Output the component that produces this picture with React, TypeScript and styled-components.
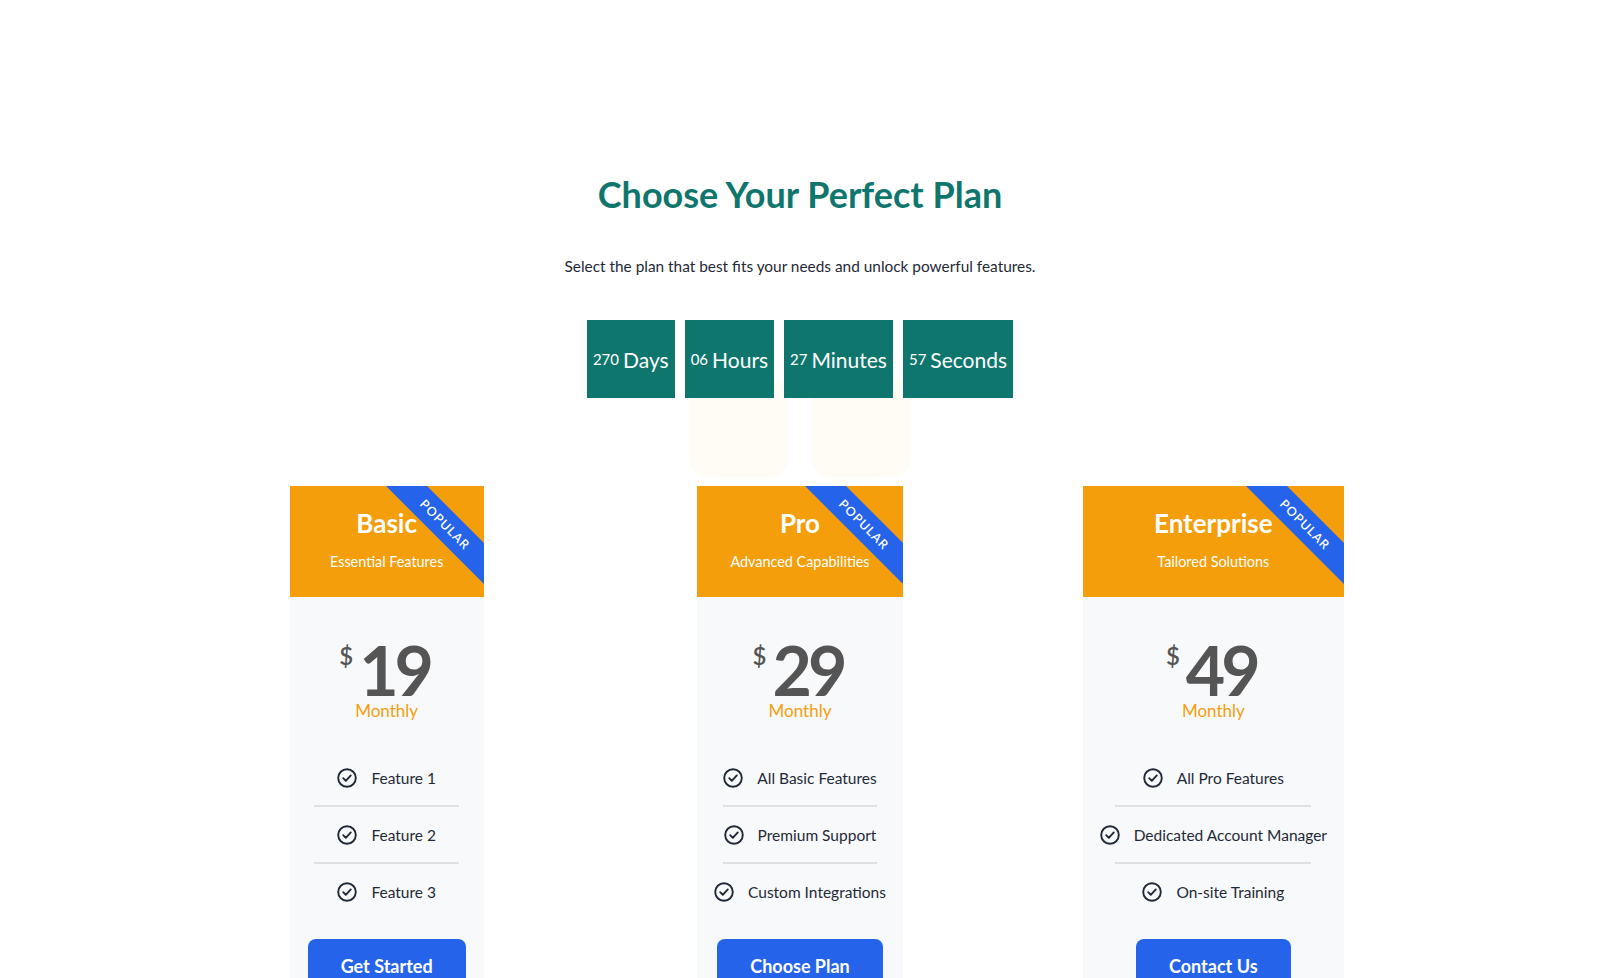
import React from "react";
import styled, { createGlobalStyle } from "styled-components";

const GlobalStyle = createGlobalStyle`
  html, body { margin: 0; padding: 0; background: #ffffff; }
  body { font-family: "Lato", "Noto Sans", sans-serif; color: #1f2937; }
  * { box-sizing: border-box; }
`;

const Page = styled.main`
  padding-top: 173px;
  text-align: center;
`;

const Title = styled.h1`
  margin: 0;
  font-size: 36px;
  line-height: 42px;
  font-weight: 700;
  color: #0f766e;
`;

const Subtitle = styled.p`
  margin: 42px 0 0;
  font-size: 15.4px;
  line-height: 18px;
  color: #1f2937;
`;

const TimerArea = styled.div`
  position: relative;
  margin-top: 45px;
`;

const Blob = styled.div<{ $offset: number }>`
  position: absolute;
  top: 57px;
  left: calc(50% + ${(p) => p.$offset}px);
  width: 100px;
  height: 100px;
  border-radius: 20px;
  background: #fefcf4;
  z-index: 0;
`;

const TimerRow = styled.div`
  position: relative;
  z-index: 1;
  display: flex;
  justify-content: center;
  gap: 10px;
`;

const TimerBox = styled.div`
  height: 78px;
  padding: 0 6px;
  background: #0f766e;
  color: #ffffff;
  display: flex;
  align-items: center;
  justify-content: center;
  white-space: nowrap;
`;

const TimerValue = styled.span`
  font-size: 15px;
  margin-right: 4px;
`;

const TimerLabel = styled.span`
  font-size: 21px;
`;

const Grid = styled.section`
  max-width: 1240px;
  margin: 88px auto 0;
  display: grid;
  grid-template-columns: repeat(3, 1fr);
  justify-items: center;
  align-items: start;
`;

const Card = styled.article`
  width: fit-content;
  background: #f8f9fa;
  text-align: center;
`;

const CardHeader = styled.header`
  position: relative;
  overflow: hidden;
  height: 111px;
  padding-top: 22px;
  background: #f59e0b;
  color: #ffffff;
`;

const PlanName = styled.h2`
  margin: 0;
  font-size: 26px;
  line-height: 31px;
  font-weight: 700;
`;

const PlanTag = styled.p`
  margin: 14px 0 0;
  font-size: 14.4px;
  line-height: 17px;
`;

const Ribbon = styled.div`
  position: absolute;
  top: 24px;
  right: -31px;
  width: 140px;
  height: 29px;
  line-height: 29px;
  background: #2563eb;
  color: #ffffff;
  font-size: 12.5px;
  font-weight: 600;
  letter-spacing: 1px;
  text-transform: uppercase;
  transform: rotate(45deg);
`;

const CardBody = styled.div`
  padding: 0 0 24px;
`;

const PriceRow = styled.div`
  margin-top: 42px;
  display: flex;
  justify-content: center;
  align-items: flex-start;
  color: #555555;
`;

const Currency = styled.span`
  font-size: 24px;
  line-height: 24px;
  font-weight: 600;
  margin-top: 5px;
  margin-right: 6px;
`;

const Amount = styled.span`
  font-size: 68px;
  line-height: 61px;
  font-weight: 700;
  letter-spacing: -4px;
  margin-right: 4px;
`;

const Period = styled.div`
  margin-top: 1px;
  font-size: 17px;
  line-height: 20px;
  color: #f59e0b;
`;

const FeatureList = styled.ul`
  list-style: none;
  margin: 29px 0 0;
  padding: 0;
`;

const FeatureItem = styled.li`
  display: flex;
  align-items: center;
  justify-content: center;
  gap: 14px;
  padding: 18px 17px 17px;
  font-size: 15.5px;
  line-height: 20px;
  color: #1f2937;
  white-space: nowrap;
`;

const Divider = styled.li`
  width: 75%;
  height: 2px;
  margin: 0 auto;
  background: #e0e0e0;
`;

const ActionButton = styled.button`
  margin: 20px 18px 0;
  padding: 16px 33px 12px;
  border: none;
  border-radius: 8px;
  background: #2563eb;
  color: #ffffff;
  font-family: inherit;
  font-size: 18px;
  line-height: 22px;
  font-weight: 700;
  cursor: pointer;
`;

const CheckIcon = () => (
  <svg width="20" height="20" viewBox="0 0 20 20" fill="none" aria-hidden="true">
    <circle cx="10" cy="10" r="8.8" stroke="#1f2937" strokeWidth="1.9" />
    <path d="M6.2 10.2 L8.8 12.8 L13.8 7.4" stroke="#1f2937" strokeWidth="1.9" strokeLinecap="round" strokeLinejoin="round" />
  </svg>
);

type Plan = {
  name: string;
  tag: string;
  price: string;
  features: string[];
  cta: string;
};

const plans: Plan[] = [
  { name: "Basic", tag: "Essential Features", price: "19", features: ["Feature 1", "Feature 2", "Feature 3"], cta: "Get Started" },
  { name: "Pro", tag: "Advanced Capabilities", price: "29", features: ["All Basic Features", "Premium Support", "Custom Integrations"], cta: "Choose Plan" },
  { name: "Enterprise", tag: "Tailored Solutions", price: "49", features: ["All Pro Features", "Dedicated Account Manager", "On-site Training"], cta: "Contact Us" },
];

const timers = [
  { value: "270", label: "Days" },
  { value: "06", label: "Hours" },
  { value: "27", label: "Minutes" },
  { value: "57", label: "Seconds" },
];

export default function App() {
  return (
    <>
      <GlobalStyle />
      <Page>
        <Title>Choose Your Perfect Plan</Title>
        <Subtitle>Select the plan that best fits your needs and unlock powerful features.</Subtitle>
        <TimerArea>
          <Blob $offset={-111} />
          <Blob $offset={11} />
          <TimerRow>
            {timers.map((t) => (
              <TimerBox key={t.label}>
                <TimerValue>{t.value}</TimerValue>
                <TimerLabel>{t.label}</TimerLabel>
              </TimerBox>
            ))}
          </TimerRow>
        </TimerArea>
        <Grid>
          {plans.map((plan) => (
            <Card key={plan.name}>
              <CardHeader>
                <PlanName>{plan.name}</PlanName>
                <PlanTag>{plan.tag}</PlanTag>
                <Ribbon>Popular</Ribbon>
              </CardHeader>
              <CardBody>
                <PriceRow>
                  <Currency>$</Currency>
                  <Amount>{plan.price}</Amount>
                </PriceRow>
                <Period>Monthly</Period>
                <FeatureList>
                  {plan.features.map((f, i) => (
                    <React.Fragment key={f}>
                      {i > 0 && <Divider aria-hidden="true" />}
                      <FeatureItem>
                        <CheckIcon />
                        <span>{f}</span>
                      </FeatureItem>
                    </React.Fragment>
                  ))}
                </FeatureList>
                <ActionButton>{plan.cta}</ActionButton>
              </CardBody>
            </Card>
          ))}
        </Grid>
      </Page>
    </>
  );
}
